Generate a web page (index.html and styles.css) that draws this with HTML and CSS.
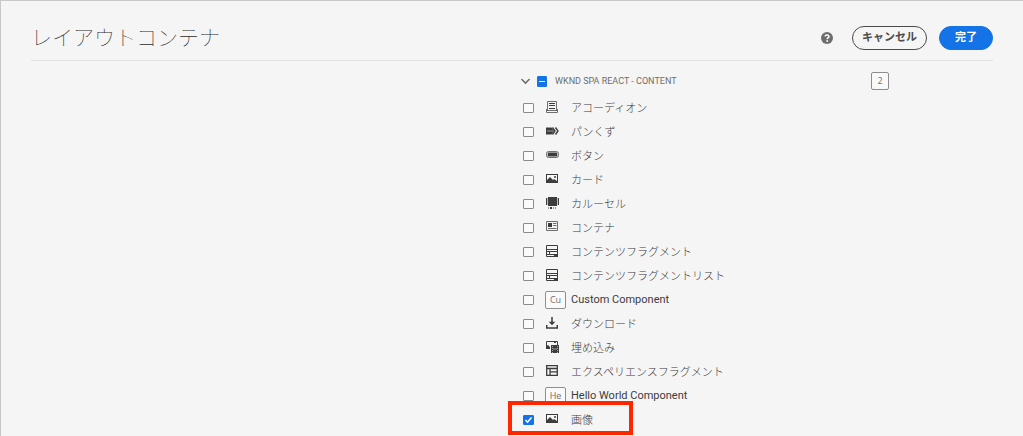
FILE: index.html
```html
<!DOCTYPE html>
<html lang="ja">
<head>
<meta charset="utf-8">
<meta name="viewport" content="width=device-width, initial-scale=1">
<title>レイアウトコンテナ</title>
<link rel="stylesheet" href="styles.css">
</head>
<body>
<svg class="sprite" aria-hidden="true">
  <symbol id="image" viewBox="0 0 12 12">
    <path fill="currentColor" fill-rule="evenodd" d="M0 1h12v9H0zM1 2v5l3-3 3 3 1-1 3 2V2z"/>
    <circle cx="9" cy="4" r="1" fill="currentColor"/>
  </symbol>
  <symbol id="fragment" viewBox="0 0 12 12">
    <path fill="none" stroke="currentColor" d="M.5.5h11v11H.5zM0 4.500h12M0 6.500h8M0 9.500h8"/>
    <path fill="currentColor" d="M7 6h4v1H7zM8 9h4v3H8zM3 6h1v4H3z"/>
  </symbol>
</svg>
<div class="page">
  <header class="header">
    <h1 class="title">レイアウトコンテナ</h1>
    <div class="actions">
      <button class="help" type="button" aria-label="ヘルプ">
        <svg class="help-icon" viewBox="0 0 12 12"><circle cx="6" cy="6" r="6" fill="#6e6e6e"/><path d="M4 4.300Q4.300 3 6 3T8 4.400C8 5.600 6.200 5.700 6.200 7.200" fill="none" stroke="#fff" stroke-width="1.500"/><circle cx="6.200" cy="9" r=".9" fill="#fff"/></svg>
      </button>
      <button class="button" type="button">キャンセル</button>
      <button class="button button-primary" type="button">完了</button>
    </div>
  </header>
  <main class="content">
    <section class="group">
      <div class="group-head">
        <button class="toggle" type="button" aria-label="折りたたむ">
          <svg class="chevron" viewBox="0 0 8 6"><path d="M.8 1.200 4 4.400l3.200-3.200" fill="none" stroke="#6e6e6e" stroke-width="1.400" stroke-linecap="round"/></svg>
        </button>
        <label class="group-label"><input class="check check-mixed" type="checkbox"><span>WKND SPA REACT - CONTENT</span></label>
        <span class="badge count">2</span>
      </div>
      <ul class="list">
        <li><label class="row"><input class="check" type="checkbox"><span class="slot"><svg class="icon" viewBox="0 0 12 12"><path d="M1.500 9V.5h9V9M.5 8v3.500h11V8M1 9.500h10" fill="none" stroke="#6e6e6e"/><path d="M3 2.500h6M3 4.500h6M3 7.500h6" stroke="currentColor"/></svg></span><span>アコーディオン</span></label></li>
        <li><label class="row"><input class="check" type="checkbox"><span class="slot"><svg class="icon icon-wide" viewBox="0 0 13 12"><path d="M0 2.500h5.500L8 6 5.500 9.500H0z" fill="currentColor"/><path d="M6.500 2.500 9 6 6.500 9.500M9.500 2.500 12 6 9.500 9.500" fill="none" stroke="currentColor" stroke-width="1.400"/><path d="M1.500 5.500h1v1h-1zM3.500 5.500h1v1h-1zM5.500 5.500h1v1h-1z" fill="#f5f5f5"/></svg></span><span>パンくず</span></label></li>
        <li><label class="row"><input class="check" type="checkbox"><span class="slot"><svg class="icon icon-wide" viewBox="0 0 13 12"><rect x=".5" y="2.500" width="12" height="6" rx="2" fill="none" stroke="#6e6e6e"/><rect x="1.700" y="3.500" width="9.600" height="4" rx=".5" fill="currentColor"/></svg></span><span>ボタン</span></label></li>
        <li><label class="row"><input class="check" type="checkbox"><span class="slot"><svg class="icon"><use href="#image"/></svg></span><span>カード</span></label></li>
        <li><label class="row"><input class="check" type="checkbox"><span class="slot"><svg class="icon icon-wide" viewBox="0 0 13 12"><path d="M2 0h9v9H2zM0 1h1.300v7H0zM11.700 1H13v7h-1.300zM2 10.500h1v1H2zM4 10h2v2H4zM7 10.500h1v1H7zM9 10.500h1v1H9z" fill="currentColor"/></svg></span><span>カルーセル</span></label></li>
        <li><label class="row"><input class="check" type="checkbox"><span class="slot"><svg class="icon" viewBox="0 0 12 12"><path d="M.5.5h11v9H.5zM7 2.500h3.500M7 4.500h3.500M2 7.500h8.500" fill="none" stroke="#6e6e6e"/><path d="M2 2h4v4H2z" fill="currentColor"/></svg></span><span>コンテナ</span></label></li>
        <li><label class="row"><input class="check" type="checkbox"><span class="slot"><svg class="icon"><use href="#fragment"/></svg></span><span>コンテンツフラグメント</span></label></li>
        <li><label class="row"><input class="check" type="checkbox"><span class="slot"><svg class="icon"><use href="#fragment"/></svg></span><span>コンテンツフラグメントリスト</span></label></li>
        <li><label class="row"><input class="check" type="checkbox"><span class="slot"><span class="badge">Cu</span></span><span class="latin">Custom Component</span></label></li>
        <li><label class="row"><input class="check" type="checkbox"><span class="slot"><svg class="icon" viewBox="0 0 12 12"><path d="M6 0v7M.7 8v3h10.600V8" fill="none" stroke="currentColor" stroke-width="1.500"/><path d="M2.800 4.800h6.400L6 8.300z" fill="currentColor"/></svg></span><span>ダウンロード</span></label></li>
        <li><label class="row"><input class="check" type="checkbox"><span class="slot"><svg class="icon icon-wide" viewBox="0 0 13 12"><path d="M.5 7V.5h11V4" fill="none" stroke="currentColor"/><path d="M0 8V5l2-1 2 2v2zM8 1h2v1H8zM5 4h8v8H5z" fill="currentColor"/><path d="M6.500 5v7M11.500 5v7" stroke="#f5f5f5" stroke-width=".6" stroke-dasharray="1 1"/><path d="M7 8h4" stroke="#f5f5f5" stroke-width=".5"/></svg></span><span>埋め込み</span></label></li>
        <li><label class="row"><input class="check" type="checkbox"><span class="slot"><svg class="icon" viewBox="0 0 12 12"><path d="M.7.7h10.600v9.600H.7zM1 3.500h10M4 3.500v7M4 6.800h7" fill="none" stroke="currentColor" stroke-width="1.300"/></svg></span><span>エクスペリエンスフラグメント</span></label></li>
        <li><label class="row"><input class="check" type="checkbox"><span class="slot"><span class="badge">He</span></span><span class="latin">Hello World Component</span></label></li>
        <li class="marked"><label class="row"><input class="check" type="checkbox" checked><span class="slot"><svg class="icon"><use href="#image"/></svg></span><span>画像</span></label></li>
      </ul>
    </section>
  </main>
</div>
</body>
</html>
```
FILE: styles.css
```css
*, *::after { box-sizing: border-box; }

body {
  margin: 0;
  overflow: hidden;
  background: #f5f5f5;
  color: #4b4b4b;
  font-family: "Open Sans", "Noto Sans CJK JP", sans-serif;
  font-size: 11px;
  line-height: 16px;
}

.sprite { display: none; }

.page {
  min-height: 100vh;
  border-top: 1px solid #c8c8c8;
  border-left: 1px solid #c8c8c8;
}

.header {
  display: flex;
  align-items: center;
  justify-content: space-between;
  height: 60px;
  margin: 0 30px;
  padding-top: 16px;
  padding-bottom: 1px;
  border-bottom: 1px solid #e1e1e1;
}

.title {
  margin: 0;
  padding-bottom: 4px;
  color: #2c2c2c;
  font-family: "Noto Sans CJK JP", sans-serif;
  font-size: 21px;
  font-weight: 100;
  line-height: 30px;
}

.actions { display: flex; align-items: center; gap: 12px; }

.help, .toggle {
  display: flex;
  padding: 0;
  border: 0;
  background: none;
}

.help { margin-right: 7px; }
.help-icon { width: 12px; height: 12px; }

.button {
  height: 24px;
  padding: 0 9px 4px;
  border: 1px solid #4b4b4b;
  border-radius: 12px;
  background: transparent;
  color: #4b4b4b;
  font-family: "Noto Sans CJK JP", sans-serif;
  font-size: 11px;
  font-weight: 700;
  line-height: 16px;
}

.button-primary {
  padding: 0 15px 4px;
  border-color: #1473e6;
  background: #1473e6;
  color: #fff;
}

.content { display: grid; grid-template-columns: 1fr 1fr; }

.group { grid-column: 2; padding: 8px 0 0 9px; }

.group-head {
  display: flex;
  align-items: center;
  height: 24px;
}

.toggle { margin-right: 7px; }
.chevron { width: 9px; height: 7px; }

.group-label {
  display: flex;
  align-items: center;
  gap: 8px;
  flex: 0 0 334px;
  color: #6e6e6e;
  font-family: Roboto, sans-serif;
  font-size: 9px;
}

.check {
  appearance: none;
  flex: none;
  width: 11px;
  height: 10px;
  margin: 0;
  border: 1px solid #8a8a8a;
  border-radius: 1px;
  background: #fafafa;
}

.check-mixed, .check:checked {
  border-color: #1473e6;
  background: #1473e6 center / contain no-repeat;
}

.check-mixed {
  width: 10px;
  height: 11px;
  background-image: linear-gradient(#fff, #fff);
  background-size: 6px 1px;
}

.check:checked {
  background-image: url("data:image/svg+xml,%3Csvg xmlns='http://www.w3.org/2000/svg' viewBox='0 0 9 8'%3E%3Cpath d='M1.500 4 3.500 6.200 7.500 1.500' fill='none' stroke='white' stroke-width='1.500'/%3E%3C/svg%3E");
}

.badge {
  display: inline-flex;
  align-items: center;
  justify-content: center;
  width: 21px;
  height: 18px;
  border: 1px solid #8e8e8e;
  border-radius: 2px;
  background: #fafafa;
  color: #6e6e6e;
  font-size: 9px;
  font-weight: 400;
  line-height: 16px;
}

.count { width: 18px; }

.list { margin: 0; padding: 3px 0 0 2px; list-style: none; }

.row {
  display: flex;
  align-items: center;
  height: 24px;
  color: #3c3c3c;
  font-weight: 300;
}

.latin {
  font-family: Roboto, sans-serif;
  font-weight: 400;
}

.slot {
  display: flex;
  width: 26px;
  margin-left: 11px;
}

.icon {
  width: 12px;
  height: 12px;
  margin: 0 0 2px 1px;
}

.icon-wide { width: 13px; }

.marked { position: relative; }

.marked::after {
  content: "";
  position: absolute;
  top: -7px;
  left: -15px;
  width: 125px;
  height: 34px;
  border: 4px solid #ff2600;
}
```
